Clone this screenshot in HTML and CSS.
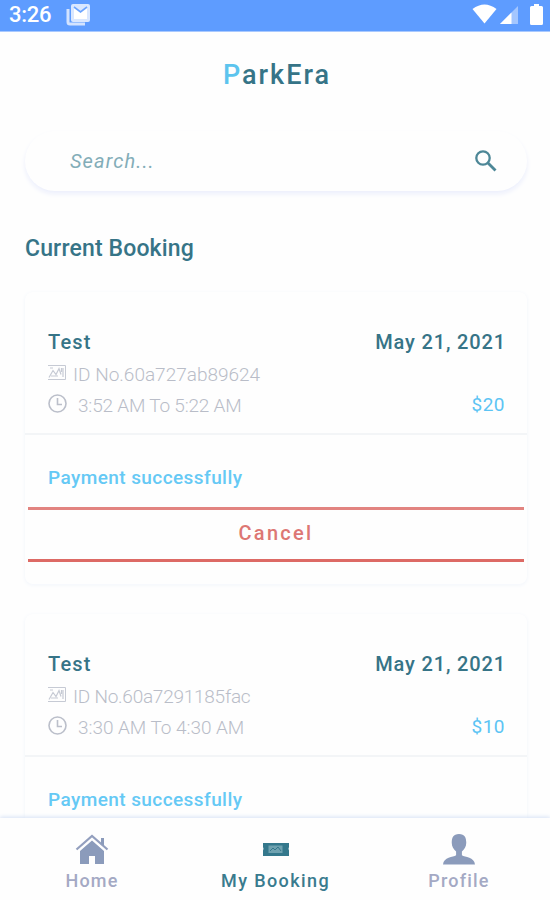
FILE: index.html
```html
<!DOCTYPE html>
<html lang="en">
<head>
    <meta charset="UTF-8">
    <meta name="viewport" content="width=device-width, initial-scale=1.0">
    <title>ParkEra</title>
    <link rel="stylesheet" href="styles.css">
</head>
<body>
    <div class="status-bar">
        <span class="clock">3:26</span>
        <svg class="mail" width="25" height="22" viewBox="0 0 25 22">
            <path d="M2 5v13q0 2 2 2h15" fill="none" stroke="#d3e3ff" stroke-width="3"/>
            <rect x="5" y="0" width="19" height="18" rx="2" fill="#d9e7ff"/>
            <path d="M8 3l6.500 5L21 3v12H8z" fill="#fff"/>
            <path d="M8 3l6.500 5L21 3" fill="none" stroke="#6ca4ff" stroke-width="1.600"/>
        </svg>
        <div class="status-icons">
            <svg width="25" height="20" viewBox="0 0 25 20"><path d="M.5 5Q12.500-4 24.500 5L12.500 19.500z" fill="#fff"/></svg>
            <svg width="19" height="18" viewBox="0 0 19 18"><path d="M0 18L18 0v18z" fill="#a3c6ff"/><path d="M0 18L11.500 6.500V18z" fill="#fff"/></svg>
            <svg class="battery" width="13" height="21" viewBox="0 0 13 21"><path d="M4 0h5v2h2.500Q13 2 13 3.500v16Q13 21 11.500 21h-10Q0 21 0 19.500v-16Q0 2 1.500 2H4z" fill="#fff"/></svg>
        </div>
    </div>

    <h1 class="logo"><span>P</span>arkEra</h1>

    <div class="search">
        <span class="placeholder">Search...</span>
        <svg width="22" height="22" viewBox="0 0 22 22" fill="none" stroke="#4d8797">
            <circle cx="8" cy="8" r="6.700" stroke-width="2.300"/>
            <path d="M13 13l7.500 7.500" stroke-width="2.800"/>
        </svg>
    </div>

    <h2 class="title">Current Booking</h2>

    <div class="bookings">
        <div class="card">
            <div class="card-info">
                <div class="row head"><span class="name">Test</span><span class="date">May 21, 2021</span></div>
                <div class="row id">
                    <svg width="18" height="15" viewBox="0 0 18 15" fill="none" stroke="#c6cad4">
                        <path d="M0 .5h17.500v14H0"/>
                        <path d="M1 12.500l4-7 3 4 3-6 2 6M3 11h7M13.500 3v4M15 3v9M2 3h3" stroke-width="1.200"/>
                    </svg>
                    <span class="id-text">ID No.60a727ab89624</span>
                </div>
                <div class="row time">
                    <svg width="19" height="19" viewBox="0 0 19 19" fill="none" stroke="#bbbfca" stroke-width="1.600">
                        <circle cx="9.500" cy="9.500" r="8.500"/>
                        <path d="M9.500 4v6.500H14"/>
                    </svg>
                    <span class="time-text">3:52 AM To 5:22 AM</span>
                    <span class="price">$20</span>
                </div>
            </div>
            <div class="payment">Payment successfully</div>
            <div class="cancel">Cancel</div>
        </div>

        <div class="card">
            <div class="card-info">
                <div class="row head"><span class="name">Test</span><span class="date">May 21, 2021</span></div>
                <div class="row id">
                    <svg width="18" height="15" viewBox="0 0 18 15" fill="none" stroke="#c6cad4">
                        <path d="M0 .5h17.500v14H0"/>
                        <path d="M1 12.500l4-7 3 4 3-6 2 6M3 11h7M13.500 3v4M15 3v9M2 3h3" stroke-width="1.200"/>
                    </svg>
                    <span class="id-text second">ID No.60a7291185fac</span>
                </div>
                <div class="row time">
                    <svg width="19" height="19" viewBox="0 0 19 19" fill="none" stroke="#bbbfca" stroke-width="1.600">
                        <circle cx="9.500" cy="9.500" r="8.500"/>
                        <path d="M9.500 4v6.500H14"/>
                    </svg>
                    <span class="time-text second">3:30 AM To 4:30 AM</span>
                    <span class="price">$10</span>
                </div>
            </div>
            <div class="payment">Payment successfully</div>
        </div>
    </div>

    <div class="nav">
        <div class="nav-item">
            <svg width="34" height="31" viewBox="0 0 34 31" fill="#8b9bbb">
                <path d="M17 6.500L5 17v13h9v-8h6v8h9V17z"/>
                <path d="M1.500 15.500L17 2l15.500 13.500" fill="none" stroke="#939fbe" stroke-width="2.200"/>
                <path d="M26 4h3v8l-3-2.600z"/>
            </svg>
            <span>Home</span>
        </div>
        <div class="nav-item active">
            <svg width="26" height="31" viewBox="0 0 26 31">
                <path d="M0 9h26v4q-1 1.500 0 3.500V22H0v-5.500q1-2 0-3.500z" fill="#34788c"/>
                <path d="M5.500 11.500h14v7.500h-14z" fill="#6fa2b0"/>
                <path d="M7 17l3-3 2 2 3-3 3 4M22.500 11v9" fill="none" stroke="#34788c"/>
            </svg>
            <span>My Booking</span>
        </div>
        <div class="nav-item">
            <svg width="34" height="32" viewBox="0 0 34 32" fill="#8b9bbb">
                <path d="M17 0c6 0 7.500 4 7.500 9 0 4-2 7-4.500 9v4c3 2 13 2 13.500 9.500H.5C1 24 11 24 14 22v-4c-2.500-2-4.500-5-4.500-9 0-5 1.500-9 7.500-9z"/>
            </svg>
            <span>Profile</span>
        </div>
    </div>
</body>
</html>
```
FILE: styles.css
```css
* {
    box-sizing: border-box;
}
body {
    margin: 0;
    height: 900px;
    display: flex;
    flex-direction: column;
    overflow: hidden;
    background-color: #fefefe;
    font-family: Roboto, sans-serif;
    color: #367487;
}
svg {
    display: block;
    flex: none;
}
span {
    white-space: nowrap;
}
.status-bar {
    flex: none;
    display: flex;
    height: 32px;
    padding: 4px 7px 0 9px;
    background-color: #5e9cff;
    border-bottom: 1px solid #a9c9ff;
    color: #fff;
}
.clock {
    width: 57px;
    font-size: 22px;
    line-height: 22px;
    font-weight: 500;
    letter-spacing: -.3px;
}
.status-icons {
    display: flex;
    margin-left: auto;
    gap: 3px;
}
.status-icons svg:nth-child(2) {
    margin-top: 2px;
}
.battery {
    margin-left: 8px;
}
.logo {
    flex: none;
    margin: 27px 0 0 4px;
    text-align: center;
    font-size: 27px;
    line-height: 32px;
    font-weight: 500;
    letter-spacing: 2px;
}
.logo span {
    color: #5cc4ee;
}
.search {
    flex: none;
    display: flex;
    align-items: center;
    justify-content: space-between;
    height: 60px;
    margin: 40px 23px 0 25px;
    padding: 0 30px 0 45px;
    border-radius: 30px;
    background-color: #fefefe;
    box-shadow: 0 3px 5px #eceffc;
}
.placeholder {
    color: #83adb8;
    font-size: 20px;
    font-style: italic;
    letter-spacing: 1.1px;
}
.title {
    flex: none;
    margin: 43px 0 0 25px;
    font-size: 23px;
    line-height: 30px;
    font-weight: 500;
    letter-spacing: .15px;
}
.bookings {
    flex: 1;
    min-height: 0;
    overflow: hidden;
    padding: 28px 23px 0 25px;
}
.card {
    height: 292px;
    margin-bottom: 30px;
    border-radius: 8px;
    background-color: #fefefe;
    box-shadow: 0 1px 4px #f1f5fb;
}
.card-info {
    height: 143px;
    padding: 37px 22px 0 23px;
    border-bottom: 2px solid #f3f5f7;
}
.row {
    display: flex;
    align-items: center;
    color: #b9bdc8;
    font-weight: 300;
}
.head {
    height: 26px;
    justify-content: space-between;
    color: #367487;
    font-size: 20px;
    font-weight: 500;
}
.name {
    letter-spacing: 1.2px;
}
.date {
    margin-right: -1px;
    letter-spacing: .85px;
}
.id {
    height: 38px;
    gap: 7px;
    font-size: 19px;
}
.id svg {
    margin-bottom: 3px;
}
.id-text.second {
    letter-spacing: -.25px;
}
.time {
    height: 24px;
    font-size: 19px;
}
.time svg {
    margin: 0 11px 4px 0;
}
.time-text {
    letter-spacing: -.2px;
}
.time-text.second {
    letter-spacing: -.05px;
}
.price {
    margin: 0 0 2px auto;
    color: #5cc4f4;
    font-weight: 400;
    letter-spacing: .5px;
}
.payment {
    height: 72px;
    padding: 31px 23px 0;
    color: #65c9f5;
    font-size: 19px;
    line-height: 24px;
    font-weight: 500;
    letter-spacing: .42px;
}
.cancel {
    height: 55px;
    margin: 0 3px;
    border-top: 3px solid #e28480;
    border-bottom: 3px solid #dd6a65;
    text-align: center;
    color: #dd7774;
    font-size: 20px;
    line-height: 47px;
    font-weight: 500;
    letter-spacing: 2.3px;
}
.nav {
    flex: none;
    display: grid;
    grid-template-columns: 182px 1fr 182px;
    height: 82px;
    padding: 16px 0 0 1px;
    background-color: #fefefe;
    box-shadow: 0 -1px 4px #d5e1f5;
    z-index: 1;
}
.nav-item {
    display: flex;
    flex-direction: column;
    align-items: center;
    gap: 5px;
    color: #a4a9c4;
    font-size: 18px;
    line-height: 22px;
    font-weight: 500;
    letter-spacing: 1.2px;
}
.nav-item svg {
    height: 31px;
}
.active {
    color: #397b8e;
    letter-spacing: 1.4px;
}
```
